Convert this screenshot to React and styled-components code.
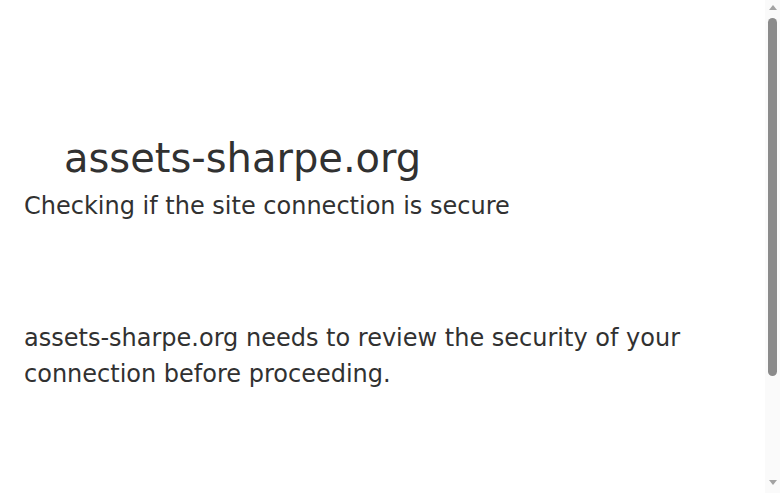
import styled, { createGlobalStyle } from "styled-components";

// 페이지 기본 스타일
const GlobalStyle = createGlobalStyle`
  * {
    box-sizing: border-box;
    margin: 0;
    padding: 0;
  }
  html, body {
    height: 100%;
    overflow: hidden;
  }
  html {
    line-height: 1.15;
    color: #313131;
  }
  body {
    font-family: "DejaVu Sans", "Noto Sans", sans-serif;
    background: #ffffff;
  }
`;

const App = () => {
  return (
    <>
      <GlobalStyle />
      <Page>
        <MainWrapper>
          <MainContent>
            <Heading>
              <Favicon aria-hidden="true" />
              assets-sharpe.org
            </Heading>
            <SubHeading>Checking if the site connection is secure</SubHeading>
            <ChallengeStage />
            <CoreMessage>
              assets-sharpe.org needs to review the security of your connection
              before proceeding.
            </CoreMessage>
          </MainContent>
        </MainWrapper>

        {/* 브라우저 스크롤바 모양 */}
        <ScrollTrack aria-hidden="true">
          <Arrow $dir="up" />
          <Thumb />
          <Arrow $dir="down" />
        </ScrollTrack>
      </Page>
    </>
  );
};

export default App;

// 페이지 + 스크롤바 가로 배치
const Page = styled.div`
  display: flex;
  height: 100vh;
  overflow: hidden;
`;

// 전체 래퍼
const MainWrapper = styled.div`
  flex: 1;
  min-width: 0;
  display: flex;
  flex-direction: column;
  align-items: center;
`;

// 본문 영역
const MainContent = styled.main`
  width: 100%;
  max-width: 60rem;
  margin: 128px auto 0;
  padding: 0 24px;
`;

// 사이트 이름 제목
const Heading = styled.h1`
  display: flex;
  align-items: center;
  font-size: 40px;
  font-weight: 500;
  line-height: 60px;
`;

// 파비콘 자리 (이미지 없음)
const Favicon = styled.span`
  display: inline-block;
  width: 32px;
  height: 32px;
  margin-right: 8px;
  flex-shrink: 0;
`;

const SubHeading = styled.h2`
  font-size: 24px;
  font-weight: 500;
  line-height: 36px;
`;

// 챌린지 위젯 자리
const ChallengeStage = styled.div`
  height: 96px;
`;

const CoreMessage = styled.p`
  font-size: 24px;
  font-weight: 400;
  line-height: 36px;
`;

// 스크롤바 트랙
const ScrollTrack = styled.div`
  width: 15px;
  flex-shrink: 0;
  display: flex;
  flex-direction: column;
  align-items: center;
  padding: 5px 0 8px;
  background: #fafafa;
`;

// 스크롤바 화살표
const Arrow = styled.div`
  width: 0;
  height: 0;
  border-left: 4.5px solid transparent;
  border-right: 4.5px solid transparent;
  ${({ $dir }) =>
    $dir === "up"
      ? "border-bottom: 5px solid #a3a3a3;"
      : "border-top: 5px solid #a3a3a3; margin-top: auto;"}
`;

// 스크롤바 손잡이
const Thumb = styled.div`
  width: 9px;
  height: 358px;
  margin-top: 8px;
  border-radius: 5px;
  background: #8b8b8b;
`;
